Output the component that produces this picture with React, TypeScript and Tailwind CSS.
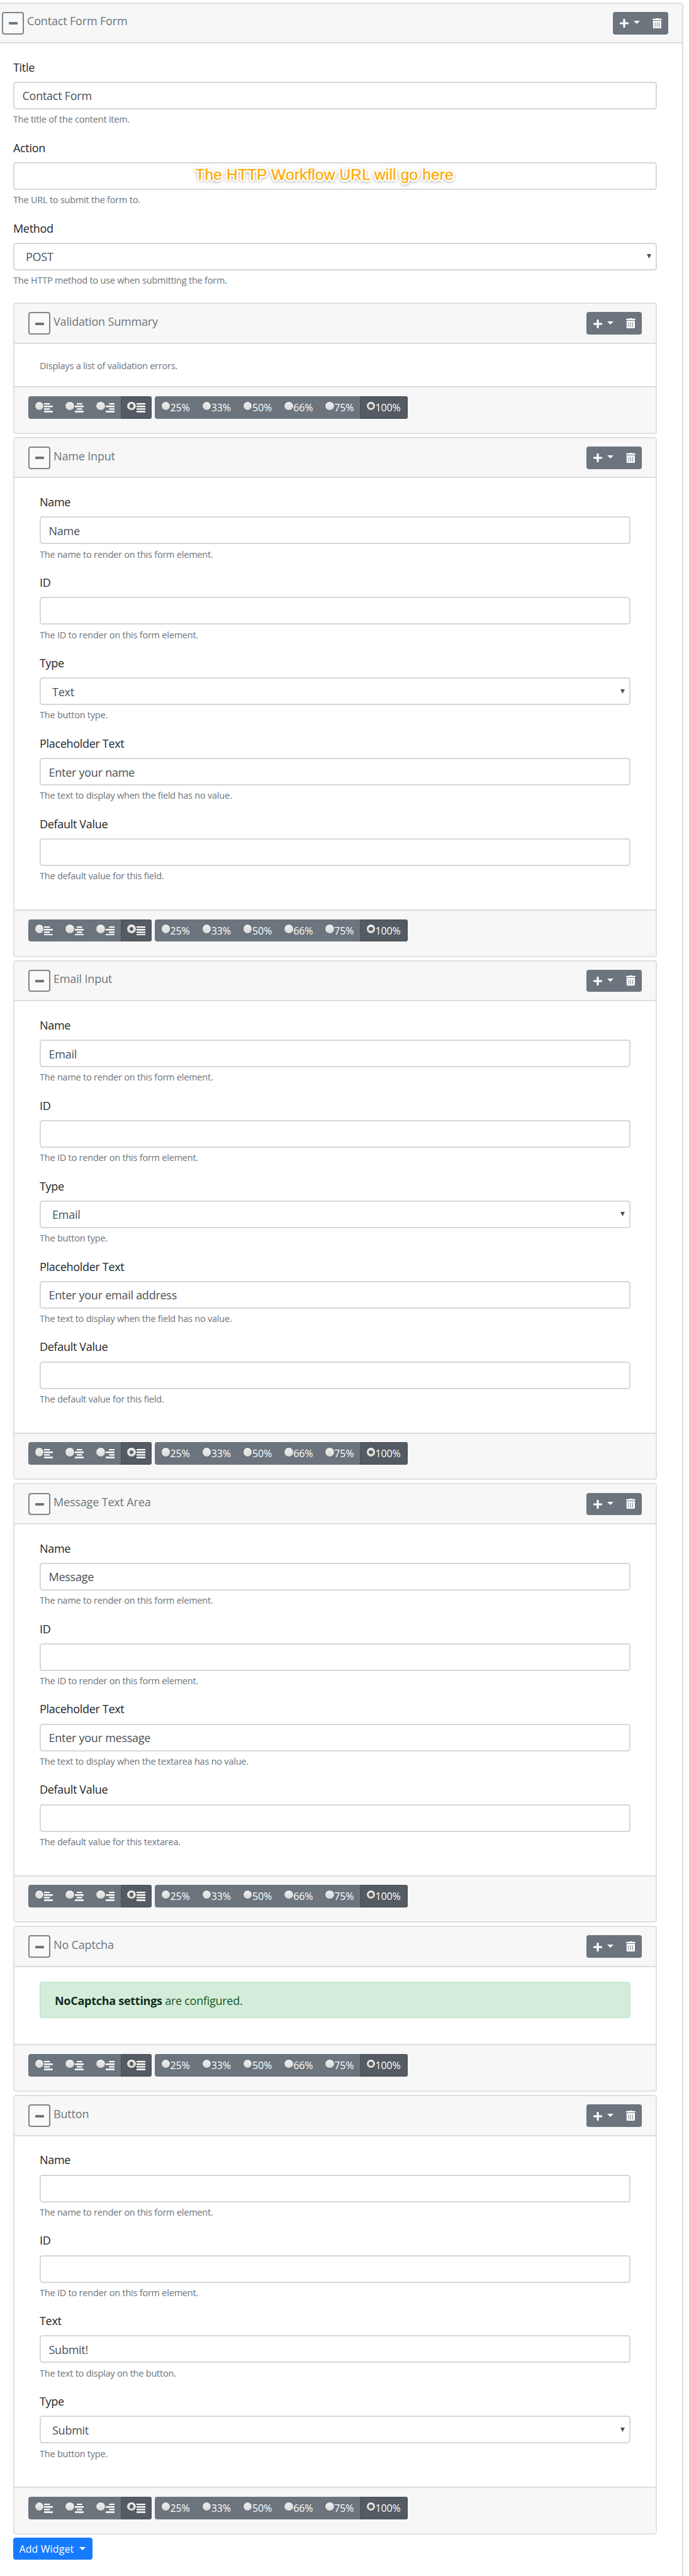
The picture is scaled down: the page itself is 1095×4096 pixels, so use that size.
import React from "react";

type Field = { label: string; value?: string; hint: string; select?: boolean; callout?: string };

const hintText = "text-[14.5px] tracking-[-0.22px] text-[#6c757d]";

function Caret({ className }: { className: string }) {
  return <span className={`inline-block border-x-[5px] border-t-[5px] border-x-transparent border-t-white ${className}`} />;
}

function Toggle() {
  return (
    <span className="flex h-[35.6px] w-[35px] items-center justify-center rounded-[4px] border-2 border-[#7d858c] bg-[#f9f9f9]">
      <span className="mt-[1px] h-[4px] w-[14px] rounded-[1px] bg-[#6c757d]" />
    </span>
  );
}

function Trash() {
  return (
    <svg viewBox="0 0 19 21" className="h-[16.3px] w-[14.8px]">
      <path fill="#fff" d="M6 1 7 0h5l1 1h5a1 1 0 0 1 1 1v1a1 1 0 0 1-1 1H1a1 1 0 0 1-1-1V2a1 1 0 0 1 1-1zM1 5h17v13.5a2.5 2.5 0 0 1-2.5 2.5h-12A2.5 2.5 0 0 1 1 18.5z" />
      <path stroke="#6c757d" strokeWidth="1.2" d="M5.4 8v10.500M9.500 8v10.500M13.600 8v10.500" />
    </svg>
  );
}

function Actions() {
  return (
    <div className="flex h-[35.6px] w-[87.6px] items-center rounded-[4px] bg-[#6c757d] pl-[10.8px] pr-[10px]">
      <svg viewBox="0 0 18 18" className="mt-px h-[14px] w-[14px]">
        <path fill="#fff" d="M8 0h2a1 1 0 0 1 1 1v6h6a1 1 0 0 1 1 1v2a1 1 0 0 1-1 1h-6v6a1 1 0 0 1-1 1H8a1 1 0 0 1-1-1v-6H1a1 1 0 0 1-1-1V8a1 1 0 0 1 1-1h6V1a1 1 0 0 1 1-1z" />
      </svg>
      <Caret className="mb-[2px] ml-[8.5px]" />
      <span className="ml-auto flex"><Trash /></span>
    </div>
  );
}

function Header({ title, outer }: { title: string; outer?: boolean }) {
  return (
    <div className={`flex h-[63.6px] items-start border-b-2 border-[#dcdcdc] bg-[#f7f7f7] pr-[22.5px] pt-[13.3px] ${outer ? "pl-[3px]" : "pl-[22px]"}`}>
      <Toggle />
      <span className="ml-[5px] mt-[0.4px] whitespace-nowrap text-[18px] leading-[28px] tracking-[-0.17px] text-[#6c757d]">{title}</span>
      <span className="ml-auto"><Actions /></span>
    </div>
  );
}

function FormField({ label, value, hint, select, callout }: Field) {
  return (
    <div className="h-[127.9px]">
      <div className="h-[37.2px] text-[18px] leading-[28.6px] tracking-[-0.32px] text-[#212529]">{label}</div>
      <div className={`relative flex h-[44px] items-center rounded-[4.5px] border-2 border-[#d3d8dd] bg-white pr-[7.3px] text-[18px] tracking-[-0.26px] text-[#495057] ${select ? "pl-[18px]" : "pl-[12.5px]"}`}>
        <span className="mt-[2px]">{value}</span>
        {select && (
          <svg viewBox="0 0 9 9" className="ml-auto h-[7px] w-[7px]">
            <path fill="#495057" d="M0 0h9L4.500 9z" />
          </svg>
        )}
        {callout && (
          <span className="absolute left-[287.5px] top-[2.5px] whitespace-nowrap font-['Liberation_Sans',sans-serif] text-[24.4px] leading-[32px] tracking-[0.2px] text-[#fdac06] [-webkit-text-stroke:0.4px_#fdac06] [text-shadow:2px_0_#fff,-2px_0_#fff,0_2px_#fff,0_-2px_#fff,2px_2px_#fff,-2px_2px_#fff,2px_-2px_#fff,-2px_-2px_#fff,3px_0_#fff,-3px_0_#fff,0_3px_#fff,0_-3px_#fff,0_1px_6px_rgba(0,0,0,0.75),0_2px_5px_rgba(0,0,0,0.6)]">
            {callout}
          </span>
        )}
      </div>
      <div className={`pt-[5.3px] leading-[22px] ${hintText}`}>{hint}</div>
    </div>
  );
}

function Radio({ on }: { on?: boolean }) {
  return (
    <span className="mb-[5px] flex h-[13.5px] w-[13.5px] shrink-0 items-center justify-center rounded-full bg-linear-to-b from-[#efefef] to-[#d9d9d9] shadow-[0_0_1px_1px_rgba(90,90,90,0.35)]">
      {on && <span className="h-[6.5px] w-[6.5px] rounded-full bg-[#5f5f5f]" />}
    </span>
  );
}

const lines: Record<string, string> = {
  left: "M0 0h12v3H0zM0 5.300h18v3H0zM0 10.600h12v3H0zM0 16h18v3H0z",
  center: "M4 0h11v3H4zM0 5.300h19v3H0zM4 10.600h11v3H4zM0 16h19v3H0z",
  right: "M7 0h12v3H7zM0 5.300h19v3H0zM7 10.600h12v3H7zM0 16h19v3H0z",
  full: "M0 0h19v3H0zM0 5.300h19v3H0zM0 10.600h19v3H0zM0 16h19v3H0z",
};

const aligns = [
  { id: "left", w: "w-[48.5px]" },
  { id: "center", w: "w-[49px]" },
  { id: "right", w: "w-[49px]" },
  { id: "full", w: "w-[49.6px] bg-[#545b62] shadow-[inset_0_0_0_1.5px_#4e555b]" },
];

function Footer() {
  return (
    <div className="h-[73.7px] border-t-2 border-[#dcdcdc] bg-[#f7f7f7] pl-[22px] pt-[13.8px]">
      <div className="flex gap-[5px]">
        <div className="flex h-[35.6px] overflow-hidden rounded-[4px] bg-[#6c757d]">
          {aligns.map((a) => (
            <span key={a.id} className={`flex items-center pl-[10.5px] ${a.w}`}>
              <Radio on={a.id === "full"} />
              <svg viewBox="0 0 19 19" className="ml-[1.3px] mt-[1px] h-[14.7px] w-[14.7px] shrink-0">
                <path fill="#fff" d={lines[a.id]} />
              </svg>
            </span>
          ))}
        </div>
        <div className="flex h-[35.6px] overflow-hidden rounded-[4px] bg-[#6c757d] text-[16px] text-white">
          {["25%", "33%", "50%", "66%", "75%", "100%"].map((p) => (
            <span key={p} className={`flex items-center pl-[10.5px] ${p === "100%" ? "w-[75.5px] bg-[#545b62] shadow-[inset_0_0_0_1.5px_#4e555b]" : "w-[65.2px]"}`}>
              <Radio on={p === "100%"} />
              <span className="ml-[0.5px] tracking-[-0.15px]">{p}</span>
            </span>
          ))}
        </div>
      </div>
    </div>
  );
}

function Widget({ title, body, children }: { title: string; body: string; children: React.ReactNode }) {
  return (
    <section className="mb-[4.9px] overflow-hidden rounded-[4.5px] border-2 border-[#e0e0e0] bg-white">
      <Header title={title} />
      <div className={`px-[40px] ${body}`}>{children}</div>
      <Footer />
    </section>
  );
}

const nameF = (value?: string): Field => ({ label: "Name", value, hint: "The name to render on this form element." });
const idF: Field = { label: "ID", hint: "The ID to render on this form element." };
const typeF = (value: string): Field => ({ label: "Type", value, hint: "The button type.", select: true });

const inputFields = (name: string, type: string, placeholder: string): Field[] => [
  nameF(name),
  idF,
  typeF(type),
  { label: "Placeholder Text", value: placeholder, hint: "The text to display when the field has no value." },
  { label: "Default Value", hint: "The default value for this field." },
];

const widgets: { title: string; fields: Field[] }[] = [
  { title: "Name Input", fields: inputFields("Name", "Text", "Enter your name") },
  { title: "Email Input", fields: inputFields("Email", "Email", "Enter your email address") },
  {
    title: "Message Text Area",
    fields: [
      nameF("Message"),
      idF,
      { label: "Placeholder Text", value: "Enter your message", hint: "The text to display when the textarea has no value." },
      { label: "Default Value", hint: "The default value for this textarea." },
    ],
  },
];

const buttonFields: Field[] = [
  nameF(),
  idF,
  { label: "Text", value: "Submit!", hint: "The text to display on the button." },
  typeF("Submit"),
];

function FieldWidget({ title, fields }: { title: string; fields: Field[] }) {
  return (
    <Widget title={title} body="pt-[23.8px] pb-[22.3px]">
      {fields.map((f) => <FormField key={f.label} {...f} />)}
    </Widget>
  );
}

export default function App() {
  return (
    <div className="h-[4096px] w-[1095px] overflow-hidden bg-white pt-[3.8px] font-['Open_Sans',sans-serif]">
      <div className="h-[4200px] w-[1086px] overflow-hidden rounded-tr-[4.5px] border-r-2 border-t-2 border-[#e0e0e0]">
        <Header title="Contact Form Form" outer />
        <div className="pl-[21px] pr-[40px] pt-[23.4px]">
          <FormField label="Title" value="Contact Form" hint="The title of the content item." />
          <FormField label="Action" hint="The URL to submit the form to." callout="The HTTP Workflow URL will go here" />
          <FormField label="Method" value="POST" hint="The HTTP method to use when submitting the form." select />
          <div className="h-[4.7px]" />
          <Widget title="Validation Summary" body="h-[67.5px] pt-[24px]">
            <div className={hintText}>Displays a list of validation errors.</div>
          </Widget>
          {widgets.map((w) => <FieldWidget key={w.title} {...w} />)}
          <Widget title="No Captcha" body="h-[122.8px] pt-[23.5px]">
            <div className="h-[58px] rounded-[4.5px] border-2 border-[#c9e7d0] bg-[#d4edda] pl-[22px] pt-[14px] text-[18px] leading-[28px] tracking-[-0.27px] text-[#155724]">
              <b className="text-[#0f2d1a]">NoCaptcha settings</b> are configured.
            </div>
          </Widget>
          <FieldWidget title="Button" fields={buttonFields} />
          <button className="flex h-[35.6px] w-[126px] items-center rounded-[4px] bg-[#177bff] pl-[9.5px] text-[16px] tracking-[0.1px] text-white">
            Add Widget <Caret className="ml-[9px]" />
          </button>
        </div>
      </div>
    </div>
  );
}
